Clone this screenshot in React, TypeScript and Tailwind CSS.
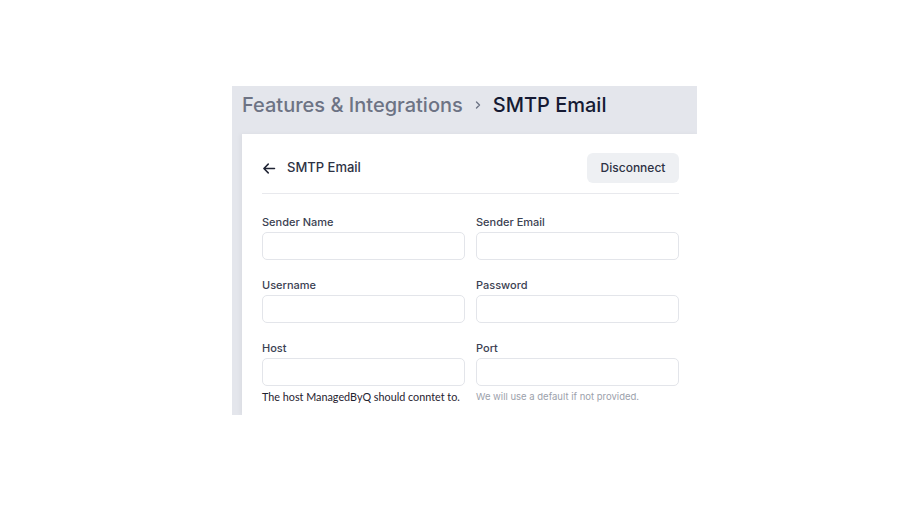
import React from 'react';

const font = { fontFamily: 'Inter, "Noto Sans", sans-serif' };

interface FieldProps {
  label: string;
  hint?: string;
  hintDark?: boolean;
}

function Field({ label, hint, hintDark }: FieldProps) {
  return (
    <div className="flex flex-col">
      <label className="text-[11px] font-medium leading-4 text-[#3b4152]">{label}</label>
      <input className="mt-[2px] h-[28px] w-full rounded-[5px] border border-[#e3e5ea] bg-white outline-none" />
      {hint && (
        <p
          className={
            hintDark
              ? 'mt-[3px] whitespace-nowrap text-[10.8px] leading-4 text-[#1f2230] [font-family:Lato,sans-serif]'
              : 'mt-[3px] whitespace-nowrap text-[9.5px] leading-4 text-[#9ca1ab]'
          }
        >
          {hint}
        </p>
      )}
    </div>
  );
}

export default function App() {
  return (
    <div className="h-[517px] w-[920px] bg-white" style={font}>
      <div className="pl-[232px] pt-[86px]">
        <div className="flex h-[329px] w-[465px] flex-col overflow-hidden bg-[#e4e6ec]">
          <div className="flex h-[48px] shrink-0 items-center pb-[10px] pl-[10px]">
            <span className="text-[20px] font-medium text-[#6d7384]">Features &amp; Integrations</span>
            <svg className="mx-[9px]" width="12" height="12" viewBox="0 0 24 24" fill="none" stroke="#6d7384" strokeWidth="2.8" strokeLinecap="round" strokeLinejoin="round">
              <path d="M9 6l6 6-6 6" />
            </svg>
            <span className="text-[20px] font-medium text-[#151a33]">SMTP Email</span>
          </div>
          <div className="ml-[10px] w-[457px] flex-1 bg-white pl-[20px] pt-[19px] shadow-[-2px_0_4px_rgba(0,0,0,0.04)]">
            <div className="w-[417px]">
              <div className="flex items-center justify-between border-b border-[#e8e9ed] pb-[10px]">
                <div className="flex items-center gap-[10px]">
                  <svg width="15" height="15" viewBox="0 0 24 24" fill="none" stroke="#1f2333" strokeWidth="2.4" strokeLinecap="round" strokeLinejoin="round">
                    <path d="M20 12H4M10 5l-7 7 7 7" />
                  </svg>
                  <span className="text-[13px] font-medium text-[#2d3244]">SMTP Email</span>
                </div>
                <button className="h-[30px] w-[92px] rounded-[6px] bg-[#eef0f3] text-[12px] font-medium text-[#2d3244]">
                  Disconnect
                </button>
              </div>
              <div className="mt-[20px] grid grid-cols-2 gap-x-[11px] gap-y-[17px]">
                <Field label="Sender Name" />
                <Field label="Sender Email" />
                <Field label="Username" />
                <Field label="Password" />
                <Field label="Host" hint="The host ManagedByQ should conntet to." hintDark />
                <Field label="Port" hint="We will use a default if not provided." />
              </div>
            </div>
          </div>
        </div>
      </div>
    </div>
  );
}
